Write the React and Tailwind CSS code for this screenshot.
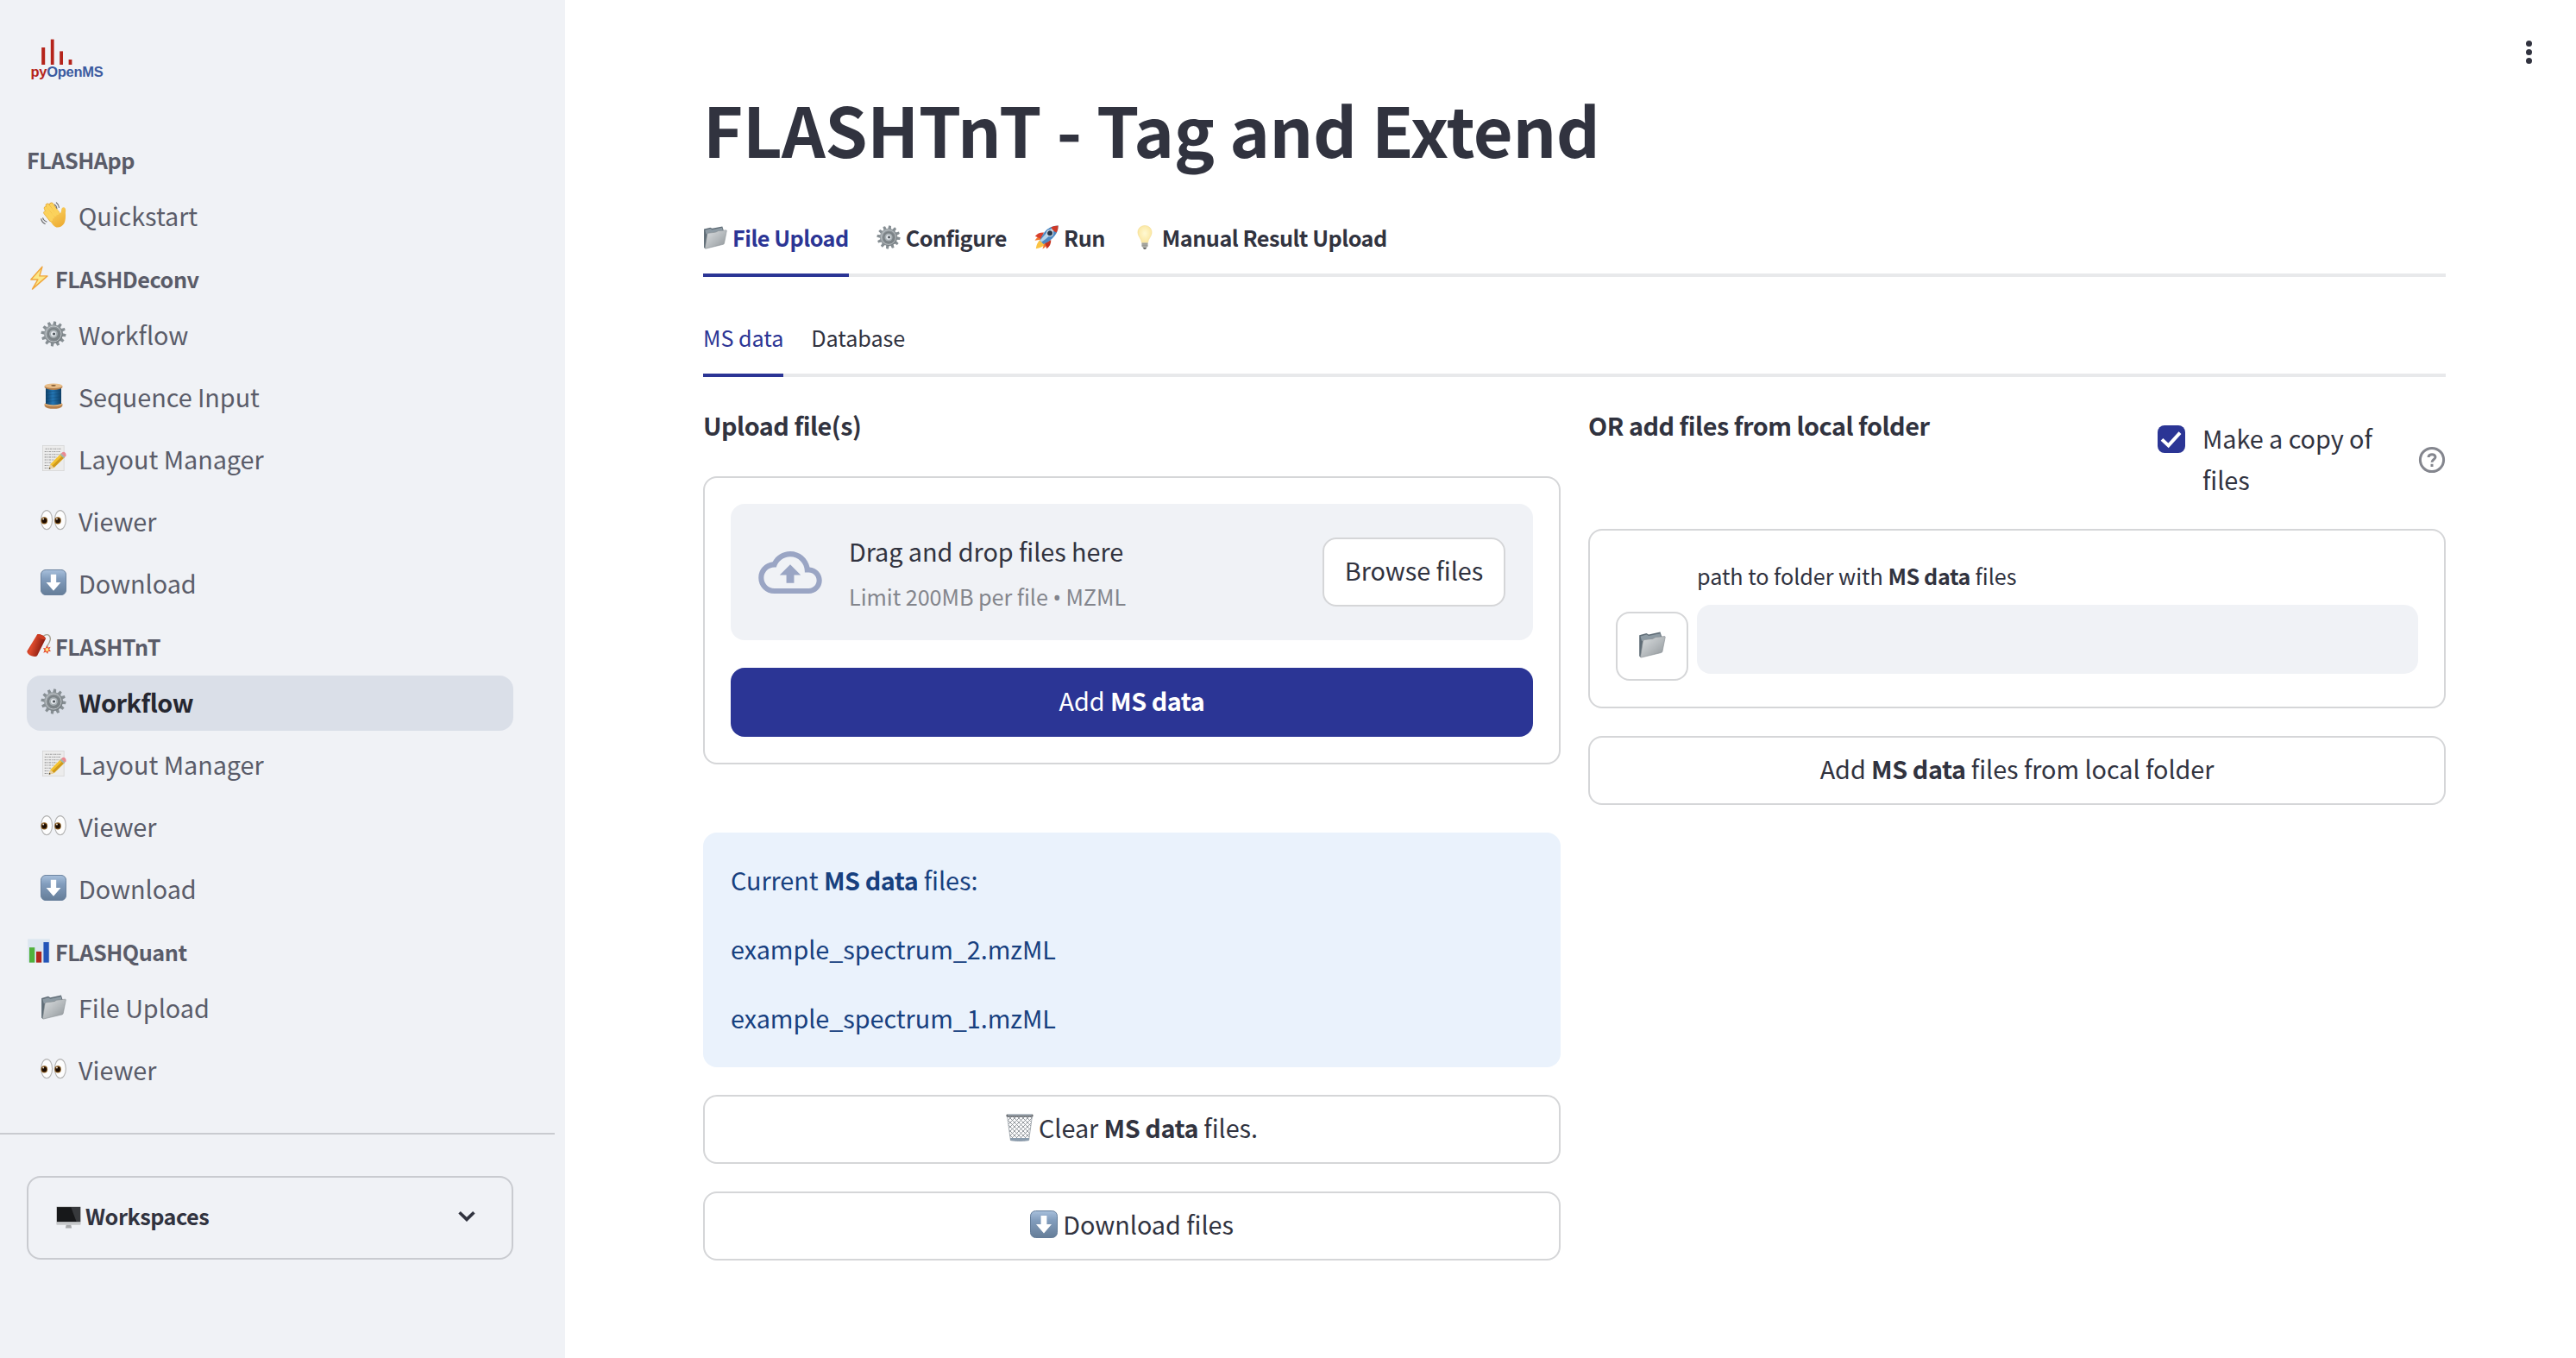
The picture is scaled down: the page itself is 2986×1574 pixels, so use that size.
import React from 'react';

const FONT = 'font-["Noto_Sans_CJK_SC","Open_Sans",sans-serif]';

/* ---------- pictograms ---------- */

function Gear({ className }) {
  const teeth = Array.from({ length: 12 }, (_, i) => i * 30);
  return (
    <svg viewBox="0 0 32 32" className={className}>
      <defs>
        <linearGradient id="gearBody" x1="0" y1="0" x2="1" y2="1">
          <stop offset="0" stopColor="#a3aaaf" />
          <stop offset="1" stopColor="#6d7478" />
        </linearGradient>
      </defs>
      {teeth.map((a) => (
        <path key={a} d="M13.8 6 L14.7 .4 L17.8 .8 L18.2 6Z" fill="#868e93" transform={`rotate(${a + 6} 16 16)`} />
      ))}
      <circle cx="16" cy="16" r="11.6" fill="url(#gearBody)" />
      <circle cx="16" cy="16" r="9.6" fill="none" stroke="#c3c9cc" strokeWidth="1" />
      <circle cx="16" cy="16" r="7.6" fill="#7b8286" />
      <circle cx="16" cy="16" r="5.2" fill="#a9b1b5" />
      <circle cx="16" cy="16" r="3.2" fill="#e6eaee" />
      <circle cx="16.6" cy="16" r="1.7" fill="#4a5157" />
    </svg>
  );
}

function Folder({ className }) {
  return (
    <svg viewBox="0 0 32 32" className={className}>
      <defs>
        <linearGradient id="folderFront" x1="0" y1="0" x2="1" y2="1">
          <stop offset="0" stopColor="#dcdfe1" />
          <stop offset=".55" stopColor="#b3b8bb" />
          <stop offset="1" stopColor="#8d9397" />
        </linearGradient>
      </defs>
      <path d="M1.2 5.2 L9.5 3 L12 4.4 L25.5 1.6 L27.5 8 L3 31 L1.2 29.6Z" fill="#5f6c76" />
      <path d="M2.6 6.6 L9.6 4.6 L12 6 L25.4 3.2 L26 7 L4 12Z" fill="#8d9aa3" />
      <path d="M5.4 12.2 Q5.6 11 7 10.6 L17 9.2 L20 7.6 L30.6 6.6 Q31.4 6.6 31.2 7.8 L28 24 Q27.8 25.2 26.6 25.5 L3.6 31 Q2.4 31.2 2.6 30Z" fill="url(#folderFront)" stroke="#858c91" strokeWidth=".6" />
    </svg>
  );
}

function ArrowDown({ className }) {
  return (
    <svg viewBox="0 0 32 32" className={className}>
      <defs>
        <linearGradient id="keyBlue" x1="0" y1="0" x2="0" y2="1">
          <stop offset="0" stopColor="#a8c0dc" />
          <stop offset=".35" stopColor="#829dbd" />
          <stop offset="1" stopColor="#657d98" />
        </linearGradient>
      </defs>
      <rect x=".5" y=".5" width="31" height="31" rx="6" fill="url(#keyBlue)" stroke="#647d9a" />
      <path d="M12.6 6 H19.4 V16 H25 L16 26.4 L7 16 H12.6Z" fill="#fff" />
    </svg>
  );
}

function Eyes({ className }) {
  return (
    <svg viewBox="0 0 32 32" className={className}>
      {[0, 16.8].map((x) => (
        <g key={x} transform={`translate(${x} 0)`}>
          <ellipse cx="7.6" cy="15.6" rx="6.9" ry="11.8" fill="#fdfdfd" stroke="#b3b3b3" strokeWidth="1.2" />
          <ellipse cx="4.6" cy="16.4" rx="4" ry="4.4" fill="#8a5a1c" />
          <circle cx="4.6" cy="16.4" r="3" fill="#1d0e04" />
          <circle cx="3.4" cy="14.4" r="1" fill="#f3e6d6" />
        </g>
      ))}
    </svg>
  );
}

function Memo({ className }) {
  return (
    <svg viewBox="0 0 32 32" className={className}>
      <rect x="2.6" y=".6" width="26.4" height="31" fill="#ececec" stroke="#d4d4d4" strokeWidth=".8" />
      <g stroke="#9a9a9a" strokeWidth="1.1" strokeDasharray="2.4 1 1.4 .8">
        <path d="M6 4.6H25" />
        <path d="M5 8H25" />
        <path d="M5 11.4H23" />
        <path d="M5 14.8H20" />
        <path d="M5 18.2H17" />
        <path d="M5 21.6H14" />
        <path d="M5 25H11" />
        <path d="M5 28.2H10" />
      </g>
      <path d="M10.4 29.6 L12.2 23.4 L25.4 10.2 L30 14.6 L16.6 27.8Z" fill="#f3c231" />
      <path d="M14.2 25.6 L27.6 12.4 L30 14.6 L16.6 27.8Z" fill="#d09a1c" />
      <path d="M25.4 10.2 L27 8.8 Q29 7.6 31 9.8 Q32 12 31.4 13.2 L30 14.6Z" fill="#e98a92" />
      <path d="M24 11.6 L25.4 10.2 L30 14.6 L28.6 16Z" fill="#9fb4b5" />
      <path d="M10.4 29.6 L12.2 23.4 L16.6 27.8Z" fill="#e9cfa0" />
      <path d="M10.4 29.6 L11 27.4 L12.6 28.9Z" fill="#333" />
    </svg>
  );
}

function Spool({ className }) {
  return (
    <svg viewBox="0 0 32 32" className={className}>
      <defs>
        <linearGradient id="thread" x1="0" y1="0" x2="1" y2="0">
          <stop offset="0" stopColor="#0d4068" />
          <stop offset=".45" stopColor="#2476b4" />
          <stop offset="1" stopColor="#0e3f66" />
        </linearGradient>
      </defs>
      <path d="M5 25.6 H27 V28.4 Q24 31.8 16 31.8 Q8 31.8 5 28.4Z" fill="#b57f4b" />
      <ellipse cx="16" cy="26" rx="11" ry="2.8" fill="#e2b27a" />
      <path d="M6.4 6 H25.6 V25.6 Q16 28.6 6.4 25.6Z" fill="url(#thread)" />
      <g stroke="#0c3c62" strokeWidth=".5" opacity=".6" fill="none">
        <path d="M6.4 11 L25.6 9" />
        <path d="M6.4 15 L25.6 13" />
        <path d="M6.4 19 L25.6 17" />
        <path d="M6.4 23 L25.6 21" />
      </g>
      <path d="M5 3.4 V5.6 Q9 8.4 16 8.4 Q23 8.4 27 5.6 V3.4Z" fill="#b57f4b" />
      <ellipse cx="16" cy="3.4" rx="11" ry="3" fill="#e8bd88" />
      <ellipse cx="16" cy="3" rx="3" ry="1" fill="#805a35" />
    </svg>
  );
}

function Bolt({ className }) {
  return (
    <svg viewBox="0 0 32 32" className={className}>
      <path d="M20.5 1.4 L5.5 18.2 H14.8 L7.4 31 L27.4 13.6 H17Z" fill="#fbe88a" stroke="#f0a63c" strokeWidth="1.6" strokeLinejoin="round" />
    </svg>
  );
}

function Dynamite({ className }) {
  return (
    <svg viewBox="0 0 32 32" className={className}>
      <defs>
        <linearGradient id="stick" x1="0" y1="0" x2="1" y2=".4">
          <stop offset="0" stopColor="#a92415" />
          <stop offset=".4" stopColor="#dd4a2c" />
          <stop offset="1" stopColor="#7d150c" />
        </linearGradient>
      </defs>
      <path d="M20 6 Q24 .8 28.4 2.2 Q32 4 31 9 Q30 13 27.6 16 L26.8 20" fill="none" stroke="#a8a190" strokeWidth="1.6" />
      <path d="M13.4 2.4 Q14.6 0 19 2 Q25 4.4 25 7.4 L14 29.4 Q12.4 32 6.4 30 Q.2 27.4 .4 23.6Z" fill="url(#stick)" />
      <path d="M13.4 2.4 Q14.6 0 19 2 Q25 4.4 25 7.4 Q23 9 18.6 7 Q13.6 4.8 13.4 2.4Z" fill="#cc3c22" />
      <path d="M26.6 15.6 L28 19 L31.6 18 L29.8 21.2 L32 24 L28.6 24 L27.6 27.4 L25.4 24.6 L22 26 L23.6 22.4 L21.6 19.6 L25 19.8Z" fill="#e5492a" />
      <circle cx="26.9" cy="21.6" r="2.3" fill="#ffdf7a" />
    </svg>
  );
}

function Chart({ className }) {
  return (
    <svg viewBox="0 0 32 32" className={className}>
      <rect x="1.4" y=".4" width="29.2" height="31.2" fill="#dce6f0" />
      <rect x="3.4" y="11.6" width="7.2" height="20" fill="#50b13c" />
      <rect x="12.6" y="17" width="7" height="14.6" fill="#b3261c" />
      <rect x="22.2" y="4.6" width="7.2" height="27" fill="#2455b8" />
    </svg>
  );
}

function Monitor({ className }) {
  return (
    <svg viewBox="0 0 32 32" className={className}>
      <path d="M13 26 H19 L20 30.4 H12Z" fill="#a7a9ab" />
      <rect x=".4" y="2.6" width="31.2" height="23.6" rx="1" fill="#c5c7c9" />
      <rect x="1" y="3.4" width="30" height="18.8" fill="#17181a" />
      <path d="M19 3.4 H31 V22.2 H26Z" fill="#37393c" />
    </svg>
  );
}

function Rocket({ className }) {
  return (
    <svg viewBox="0 0 32 32" className={className}>
      <path d="M2 31 Q3 24 7 19.6 L14 25.6 Q10 30 2 31Z" fill="#fbc342" />
      <path d="M.6 20.4 Q3.6 15 9.4 14.4 L8 19Z" fill="#f2762e" />
      <path d="M10.8 31.4 Q17 28.6 17.8 22.6 L13 24.4Z" fill="#f2762e" />
      <path d="M1 14.6 Q5 9.4 12.6 9.8 L9 18.4Z" fill="#d8402c" />
      <path d="M16.4 31 Q22.4 27 22 19.4 L14 23.6Z" fill="#c5331f" />
      <path d="M31.6 .6 Q20 .6 13 9.6 Q9.4 14.2 7.4 20.4 L12 25 Q19 22.4 23.4 18 Q31.6 10.6 31.6 .6Z" fill="#4d88c2" />
      <path d="M31.6 .6 Q22 3 15 11.4 Q11 16 7.4 20.4 L9.6 22.4 Q22 14 31.6 .6Z" fill="#b4d4ea" />
      <path d="M31.6 .6 Q26.4 .6 22.2 2.6 Q24 7.6 29.4 9.8 Q31.6 5.4 31.6 .6Z" fill="#cf3a28" />
      <circle cx="20.6" cy="10.6" r="4" fill="#27364a" />
      <circle cx="20.6" cy="10.6" r="4" fill="none" stroke="#d9e4ec" strokeWidth="1.2" />
    </svg>
  );
}

function Bulb({ className }) {
  return (
    <svg viewBox="0 0 32 32" className={className}>
      <defs>
        <radialGradient id="glow" cx=".5" cy=".45" r=".6">
          <stop offset="0" stopColor="#fff9d2" />
          <stop offset="1" stopColor="#fae49a" />
        </radialGradient>
      </defs>
      <path d="M16 .6 C10 .6 6.6 5 6.8 10 C7 15 11.4 17.6 12 23.4 H20 C20.6 17.6 25 15 25.2 10 C25.4 5 22 .6 16 .6Z" fill="url(#glow)" stroke="#f1d98c" strokeWidth=".6" />
      <path d="M12 23.2 H20 V27.8 L18.4 30 H13.6 L12 27.8Z" fill="#b5b5b0" />
      <path d="M12 25 H20 M12 27.2 H20" stroke="#85857f" strokeWidth=".9" />
      <path d="M13.6 30 H18.4 L17.2 31.6 H14.8Z" fill="#3f3f3d" />
    </svg>
  );
}

function Trash({ className }) {
  return (
    <svg viewBox="0 0 32 32" className={className}>
      <defs>
        <pattern id="mesh" width="5" height="5" patternUnits="userSpaceOnUse">
          <path d="M0 0 L5 5 M5 0 L0 5" stroke="#7d848a" strokeWidth=".8" />
        </pattern>
      </defs>
      <path d="M1.6 3 H30.4 L26.6 30.6 Q16 32.4 5.4 30.6Z" fill="#fbfbfc" />
      <path d="M1.6 3 H30.4 L26.6 30.6 Q16 32.4 5.4 30.6Z" fill="url(#mesh)" stroke="#969da3" strokeWidth=".8" />
      <path d="M5 28 H27 L26.6 31 Q16 32.6 5.4 31Z" fill="#8b9cad" />
      <rect x=".4" y=".6" width="31.2" height="3" rx="1.4" fill="#66696d" />
      <rect x="2" y=".6" width="28" height="1.1" rx=".5" fill="#b9c6d2" />
    </svg>
  );
}

function Wave({ className }) {
  return (
    <svg viewBox="0 0 32 32" className={className}>
      <defs>
        <linearGradient id="skin" x1="0" y1="0" x2=".6" y2="1">
          <stop offset="0" stopColor="#fcd868" />
          <stop offset="1" stopColor="#eeae35" />
        </linearGradient>
      </defs>
      <g stroke="#e3a532" strokeWidth="5.2" strokeLinecap="round">
        <path d="M6.6 8 L15 19" />
        <path d="M8.6 4.4 L18 16" />
        <path d="M13.4 3.2 L21 14" />
        <path d="M6.2 13.4 L13 22" />
      </g>
      <path d="M9 18 L20.6 9 L24.4 14.4 Q25.6 12.6 26 8.4 Q27 6 29.6 7 Q31.8 8.4 30.8 13 Q31.6 22 29 27 Q25.6 32 19.6 31.4 Q15 30.4 9 18Z" fill="url(#skin)" />
      <g stroke="#fbd25c" strokeWidth="4" strokeLinecap="round">
        <path d="M6.6 8 L15 19" />
        <path d="M8.8 4.6 L18 16" />
        <path d="M13.4 3.4 L21 14" />
        <path d="M6.2 13.4 L13 22" />
      </g>
      <g fill="none" stroke="#6f6f70" strokeWidth="1.2" strokeLinecap="round">
        <path d="M19.6 1 Q22.4 3.2 22.8 6.8" />
        <path d="M17.6 3.4 Q19.8 5 20.2 8" />
        <path d="M.8 21 Q1.6 25.4 5.6 27.2" />
        <path d="M2.8 20 Q4 23.4 7.4 24.6" />
      </g>
    </svg>
  );
}

/* ---------- sidebar ---------- */

const NAV = [
  { title: 'FLASHApp', items: [[Wave, 'Quickstart']] },
  {
    title: 'FLASHDeconv',
    icon: Bolt,
    items: [[Gear, 'Workflow'], [Spool, 'Sequence Input'], [Memo, 'Layout Manager'], [Eyes, 'Viewer'], [ArrowDown, 'Download']],
  },
  {
    title: 'FLASHTnT',
    icon: Dynamite,
    items: [[Gear, 'Workflow', true], [Memo, 'Layout Manager'], [Eyes, 'Viewer'], [ArrowDown, 'Download']],
  },
  { title: 'FLASHQuant', icon: Chart, items: [[Folder, 'File Upload'], [Eyes, 'Viewer']] },
];

function Logo() {
  return (
    <svg viewBox="0 0 90 52" className="h-[52px] w-[90px]">
      <g fill="#b5241b">
        <rect x="13.2" y="11" width="4" height="20" />
        <rect x="23.8" y="1.6" width="3.8" height="29.4" />
        <rect x="34.2" y="15.4" width="3.8" height="15.6" />
        <rect x="44.6" y="25" width="3.8" height="6" />
      </g>
      <text x="0.6" y="45.4" fontSize="16.5" fontWeight="700" fontFamily="Liberation Sans, sans-serif" textLength="84" fill="#3c5ba0">
        <tspan fill="#b5241b">py</tspan>OpenMS
      </text>
    </svg>
  );
}

function NavItem({ Icon, label, active }) {
  return (
    <a
      className={`flex h-16 items-center gap-[14px] rounded-2xl pb-[3px] pl-4 text-[28.8px] ${
        active ? 'bg-[#dadfe8] font-bold tracking-[-0.016em] text-[#262730]' : 'text-[#5a5c69]'
      }`}
    >
      <Icon className="mb-[2px] size-[30px]" />
      <span>{label}</span>
    </a>
  );
}

function Sidebar() {
  return (
    <aside className="flex h-full w-[655px] shrink-0 flex-col bg-[#f0f2f6]">
      <div className="h-[149px] pt-11 pl-[35px]">
        <Logo />
      </div>
      <nav className="pr-[60px] pl-[31px]">
        {NAV.map(({ title, icon: Icon, items }) => (
          <section key={title}>
            <h2 className="flex h-[66px] items-center gap-[5px] pt-2 text-[25.2px] font-bold tracking-[-0.018em] text-[#5a5c69]">
              {Icon && <Icon className="mb-1 size-[28px]" />}
              <span>{title}</span>
            </h2>
            <div className="flex flex-col gap-2 py-1">
              {items.map(([I, label, active]) => (
                <NavItem key={label} Icon={I} label={label} active={active} />
              ))}
            </div>
          </section>
        ))}
      </nav>
      <div className="mt-[36px] h-[2px] w-[643px] shrink-0 bg-[#c9cbd0]" />
      <button className="mt-12 ml-[31px] flex h-[97px] w-[564px] items-center gap-[5px] rounded-2xl border-2 border-[#c9cbd0] pr-[42px] pb-[3px] pl-8 text-[25.2px] font-bold tracking-[-0.018em] text-[#31333f]">
        <Monitor className="size-[29px]" />
        <span className="grow text-left">Workspaces</span>
        <svg viewBox="0 0 20 14" className="h-[14px] w-[20px]">
          <path d="M1.6 2.2 L10 10.4 L18.4 2.2" fill="none" stroke="#31333f" strokeWidth="3.6" />
        </svg>
      </button>
    </aside>
  );
}

/* ---------- main area ---------- */

const Strong = ({ children }) => <strong className="font-bold tracking-[-0.016em]">{children}</strong>;

function Tabs({ children, className }) {
  return <div className={`flex gap-8 shadow-[inset_0_-4px_0_#e8e9eb] ${className}`}>{children}</div>;
}

function Tab({ Icon, label, active, bold }) {
  return (
    <button
      className={`flex items-center gap-[6px] border-b-4 pt-px text-[25.2px] ${bold ? 'font-bold tracking-[-0.02em]' : ''} ${
        active ? 'border-[#2b3595] text-[#2b3595]' : 'border-transparent text-[#31333f]'
      }`}
    >
      {Icon && <Icon className="mb-[2px] size-[28px]" />}
      <span>{label}</span>
    </button>
  );
}

function OutlineButton({ children, className }) {
  return (
    <button className={`flex h-20 items-center justify-center rounded-2xl border-2 border-[#d5d6d8] bg-white pb-[5px] text-[28.8px] text-[#31333f] ${className}`}>
      {children}
    </button>
  );
}

function UploadColumn() {
  return (
    <div className="flex flex-col pt-8">
      <h3 className="h-12 text-[28.8px] leading-[48px] font-bold tracking-[-0.017em]">Upload file(s)</h3>
      <div className="mt-[35px] flex flex-col gap-8 rounded-2xl border-2 border-[#d5d6d8] p-[30px]">
        <div className="flex h-[158px] items-center rounded-2xl bg-[#f0f2f6] px-8">
          <svg viewBox="0 4 24 16" className="h-[49px] w-[74px]" fill="#9aa5c4">
            <path d="M19.35 10.04C18.67 6.59 15.64 4 12 4 9.11 4 6.6 5.64 5.35 8.04 2.34 8.36 0 10.91 0 14c0 3.31 2.69 6 6 6h13c2.76 0 5-2.24 5-5 0-2.64-2.05-4.78-4.65-4.96zM19 18H6c-2.21 0-4-1.79-4-4s1.79-4 4-4h.71C7.37 7.69 9.48 6 12 6c3.04 0 5.5 2.46 5.5 5.5v.5H19c1.66 0 3 1.34 3 3s-1.34 3-3 3z" />
            <path d="M8 13h2.55v3h2.9v-3H16l-4-4z" />
          </svg>
          <div className="ml-[31px] flex grow flex-col pt-[5px]">
            <span className="text-[28.8px] leading-[52px]">Drag and drop files here</span>
            <span className="text-[25.2px] leading-[52px] text-[#83858c]">
              Limit 200MB per file <span className='font-["Noto_Sans"]'>•</span> MZML
            </span>
          </div>
          <OutlineButton className="w-[212px]">Browse files</OutlineButton>
        </div>
        <button className="h-20 rounded-2xl bg-[#2b3595] pb-[5px] text-[28.8px] text-white">
          Add <Strong>MS data</Strong>
        </button>
      </div>
      <div className="mt-[79px] flex h-[272px] flex-col gap-8 rounded-2xl bg-[#eaf2fc] px-8 pt-[31px] text-[28.8px] leading-[48px] text-[#17407f]">
        <p>
          Current <Strong>MS data</Strong> files:
        </p>
        <p>example_spectrum_2.mzML</p>
        <p>example_spectrum_1.mzML</p>
      </div>
      <OutlineButton className="mt-8 gap-[6px]">
        <Trash className="size-8" />
        <span>
          Clear <Strong>MS data</Strong> files.
        </span>
      </OutlineButton>
      <OutlineButton className="mt-8 gap-[6px]">
        <ArrowDown className="size-8" />
        <span>Download files</span>
      </OutlineButton>
    </div>
  );
}

function LocalFolderColumn() {
  return (
    <div className="flex flex-col pt-8">
      <div className="flex h-36">
        <h3 className="h-12 w-[660px] text-[28.8px] leading-[48px] font-bold tracking-[-0.017em]">OR add files from local folder</h3>
        <span className="mt-6 flex size-8 items-center justify-center rounded-lg bg-[#2b3595]">
          <svg viewBox="0 0 32 32" className="size-8">
            <path d="M5 16.4 L12.6 23.4 L26 8.6" fill="none" stroke="#fff" strokeWidth="4" />
          </svg>
        </span>
        <span className="mt-[15px] ml-5 w-[240px] text-[28.8px] leading-[48px]">Make a copy of files</span>
        <svg viewBox="0 0 32 32" className="mt-12 ml-[10px] size-8" fill="none" stroke="#84868e" strokeWidth="3">
          <circle cx="16" cy="16" r="13.6" />
          <path d="M12 13 C12 8.6 20.2 8.6 20 13 C19.8 15.6 16 15.4 16 18.8" />
          <path d="M16 20.8 V24" />
        </svg>
      </div>
      <div className="flex h-[208px] gap-[10px] rounded-2xl border-2 border-[#d5d6d8] px-[30px] pt-[30px]">
        <OutlineButton className="mt-16 w-[84px]">
          <Folder className="size-[32px]" />
        </OutlineButton>
        <label className="flex w-[836px] flex-col text-[25.2px] leading-[44px]">
          <span>
            path to folder with <Strong>MS data</Strong> files
          </span>
          <span className="mt-3 h-20 rounded-2xl bg-[#f0f2f6]" />
        </label>
      </div>
      <OutlineButton className="mt-8">
        <span>
          Add <Strong>MS data</Strong> files from local folder
        </span>
      </OutlineButton>
    </div>
  );
}

export default function App() {
  return (
    <div className={`flex h-[1574px] w-[2986px] overflow-hidden bg-white tracking-[-0.003em] text-[#31333f] ${FONT}`}>
      <Sidebar />
      <main className="ml-[160px] flex w-[2020px] shrink-0 flex-col pt-24">
        <h1 className="h-[106px] text-[79.2px] leading-[106px] font-bold tracking-[-0.005em]">FLASHTnT - Tag and Extend</h1>
        <Tabs className="mt-[31px] h-[88px]">
          <Tab Icon={Folder} label="File Upload" active bold />
          <Tab Icon={Gear} label="Configure" bold />
          <Tab Icon={Rocket} label="Run" bold />
          <Tab Icon={Bulb} label="Manual Result Upload" bold />
        </Tabs>
        <Tabs className="mt-[29px] h-[87px]">
          <Tab label="MS data" active />
          <Tab label="Database" />
        </Tabs>
        <div className="grid grid-cols-2 gap-8">
          <UploadColumn />
          <LocalFolderColumn />
        </div>
      </main>
      <div className="mt-[47px] ml-[93px] flex flex-col gap-[3px]">
        <span className="size-[7px] rounded-full bg-[#31333f]" />
        <span className="size-[7px] rounded-full bg-[#31333f]" />
        <span className="size-[7px] rounded-full bg-[#31333f]" />
      </div>
    </div>
  );
}
